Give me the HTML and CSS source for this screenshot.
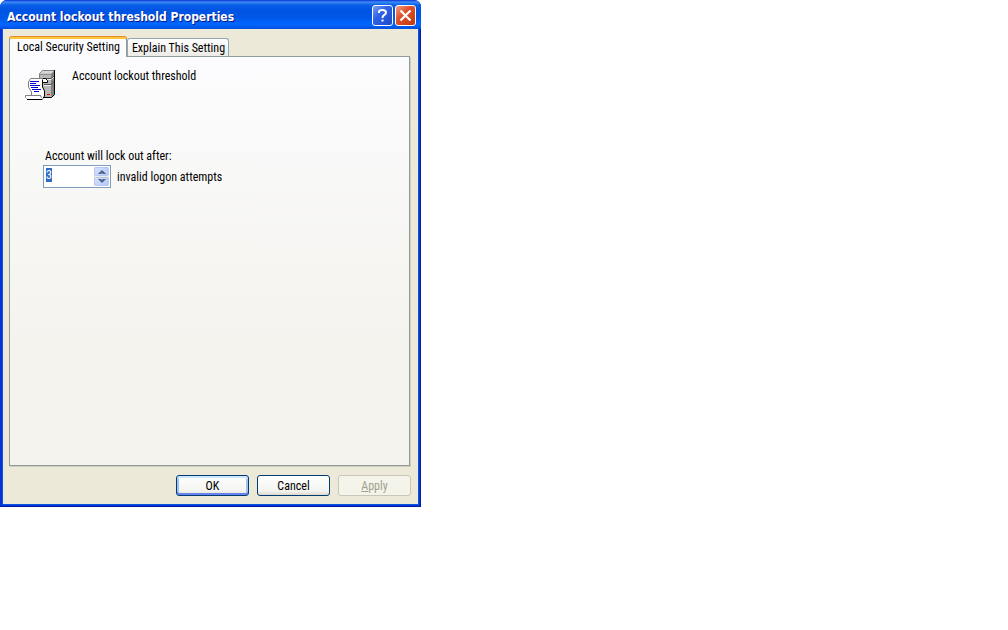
FILE: index.html
```
<!DOCTYPE html>
<html lang="en">
<head>
  <meta charset="UTF-8">
  <title>Account lockout threshold Properties</title>
  <meta name="viewport" content="width=device-width,initial-scale=1">
  <link rel="stylesheet" href="styles.css">
  <script>
    // start with the value selected, ready to type over
    function init(){
      document.getElementById("attempts").select();
    }
    function step(n){
      var box = document.getElementById("attempts");
      box.value = Math.max(0, Number(box.value) + n);
      box.select();
    }
  </script>
</head>
<body onload="init();">
  <form class="dialog" onsubmit="return false;">
    <div class="titlebar">
      <h1>Account lockout threshold Properties</h1>
      <button type="button" class="caption help" aria-label="Help">
        <svg width="19" height="19" viewBox="0 0 19 19">
          <path d="M6 7V5.500Q6.500 4 9.500 4Q13 4 13 6.500Q13 8 11 9.200Q9.500 10 9.500 12M9.500 13.500V15.500" fill="none" stroke="#fff" stroke-width="2"/>
        </svg>
      </button>
      <button type="button" class="caption close" aria-label="Close">
        <svg width="19" height="19" viewBox="0 0 19 19">
          <path d="M4.500 4.500L14.500 14.500M14.500 4.500L4.500 14.500" fill="none" stroke="#fff" stroke-width="2.200"/>
        </svg>
      </button>
    </div>
    <div class="content">
      <div class="tabs">
        <button type="button" class="tab active">Local Security Setting</button>
        <button type="button" class="tab">Explain This Setting</button>
      </div>
      <div class="panel">
        <div class="heading">
          <svg width="32" height="32" viewBox="0 0 32 32">
            <!-- server -->
            <path d="M15 5L19 1H31V26L27 29H15Z" fill="#b8b8b8"/>
            <path d="M27 5L30 2V26L27 28Z" fill="#808080"/>
            <path d="M16 4.500L18.500 1.500H30L27 4.500Z" fill="#d6d6d6"/>
            <path d="M15.500 10V4.500L18.500 1.500H30" fill="none" stroke="#808080"/>
            <path d="M16 5.500H27" stroke="#909090"/>
            <path d="M20 10.500H27L30 8" fill="none" stroke="#f0f0f0"/>
            <path d="M20 9.500H27L30 7M20 15.500H27L30 13" fill="none" stroke="#505050"/>
            <path d="M20 16.500H27" fill="none" stroke="#f0f0f0"/>
            <path d="M30.500 1V25.500L27.500 28.500H19" fill="none" stroke="#000"/>
            <path d="M23 25.500H26" stroke="#f00"/>
            <!-- scroll -->
            <path d="M6.500 9.500H20L23 11V13H18.500V18L20.500 22V27L18 30H3L1.500 26.500H7L8 24L4.500 18V13Z" fill="#fff"/>
            <path d="M7.500 26V23L4.500 18V13L6.500 9.500H19" fill="none" stroke="#808080"/>
            <path d="M19 9.500H21.500L23.500 11.500V13.500H18.500V10.500M18.500 13.500V18L20.500 22V27L19 29.500" fill="none" stroke="#000"/>
            <path d="M17 26.500H1.500V28.500L2.500 29.500M16.500 26.500L17.500 29" fill="none" stroke="#808080"/>
            <path d="M3 30.500H18.500" stroke="#000"/>
            <path d="M6 12.500H15M6 14.500H12M6 16.500H16M7 18.500H14M8 20.500H17M10 22.500H15" stroke="#0000d0"/>
          </svg>
          <span>Account lockout threshold</span>
        </div>
        <div class="setting">
          <label for="attempts">Account will lock out after:</label>
          <div class="row">
            <div class="spinner">
              <input type="text" id="attempts" value="3">
              <div class="arrows">
                <button type="button" aria-label="Increase" onclick="step(1)">
                  <svg width="8" height="5" viewBox="0 0 8 5"><path d="M0 5L4 1L8 5H5L4 4L3 5Z" fill="#4d6185"/></svg>
                </button>
                <button type="button" aria-label="Decrease" onclick="step(-1)">
                  <svg width="8" height="5" viewBox="0 0 8 5"><path d="M0 0L4 4L8 0H5L4 1L3 0Z" fill="#4d6185"/></svg>
                </button>
              </div>
            </div>
            <span>invalid logon attempts</span>
          </div>
        </div>
      </div>
      <div class="buttons">
        <button type="submit" class="default">OK</button>
        <button type="button">Cancel</button>
        <button type="button" disabled><u>A</u>pply</button>
      </div>
    </div>
  </form>
</body>
</html>
```

FILE: styles.css
```
* {
  box-sizing: border-box;
}
body {
  margin: 0;
  background: #fff;
  color: #000;
  font-family: "Roboto Condensed", Roboto, sans-serif;
  font-size: 12px;
  line-height: 14px;
}
button, input {
  margin: 0;
  padding: 0;
  font: inherit;
  color: inherit;
}
svg {
  display: block;
  flex: none;
}
.dialog {
  width: 100%;
  max-width: 421px;
  padding-bottom: 3px;
  border-radius: 7px 7px 0 0;
  background: #0831d9;
  box-shadow: inset -1px -1px #001ea0;
  overflow: hidden;
}

/* title bar */
.titlebar {
  display: flex;
  align-items: center;
  gap: 2px;
  height: 29px;
  padding: 2px 5px 0 7px;
  background: linear-gradient(#0831d9 0, #3c8cf5 2px, #0a5fe8 5px, #0054e3 10px, #0056e6 17px, #0066ff 24px, #005bf0 27px, #003dd0 29px);
}
.titlebar h1 {
  flex: 1;
  margin: 0;
  padding-top: 2px;
  color: #fff;
  font-family: "DejaVu Sans Condensed", "Open Sans", sans-serif;
  font-size: 12px;
  line-height: 16px;
  font-weight: bold;
  text-shadow: 1px 1px #0a1883;
}
.caption {
  width: 21px;
  height: 21px;
  border: 1px solid #fff;
  border-radius: 3px;
}
.help {
  background: linear-gradient(135deg, #7f9ff0, #2f62e8 40%, #1c49c8);
}
.close {
  background: linear-gradient(135deg, #f0a088, #e0512c 40%, #c03810);
}

.content {
  margin: 0 3px;
  padding: 8px 7px 8px 6px;
  background: #ece9d8;
  box-shadow: 0 0 0 1px #0855dd;
}

/* tabs */
.tabs {
  display: flex;
  align-items: flex-end;
}
.tab {
  height: 18px;
  padding: 0 3px 0 4px;
  border: 1px solid #91a7b4;
  border-bottom: 0;
  border-radius: 3px 3px 0 0;
  background: linear-gradient(#fff, #ecebe6);
  white-space: nowrap;
}
.tab.active {
  z-index: 1;
  height: 20px;
  margin-bottom: -1px;
  padding: 0 6px 3px 7px;
  border-color: #919b9c;
  border-top: 2px solid #ffc73c;
  box-shadow: 0 -1px #e68b2c;
  background: #fcfcfe;
}
.panel {
  min-height: 410px;
  margin-right: 1px;
  padding: 12px 14px;
  border: 1px solid #919b9c;
  box-shadow: 1px 1px #d0cebf;
  background: linear-gradient(#fcfcfe, #f4f3ee 70%);
}
.heading {
  display: flex;
  gap: 16px;
}

/* lockout value */
.setting {
  margin: 48px 0 0 19px;
}
.setting label {
  display: block;
  margin: 0 0 2px 2px;
}
.row {
  display: flex;
  align-items: center;
  gap: 6px;
}
.spinner {
  display: flex;
  width: 68px;
  height: 23px;
  padding: 1px;
  border: 1px solid #7f9db9;
  background: #fff;
}
.spinner input {
  flex: 1;
  min-width: 0;
  height: 16px;
  padding-left: 1px;
  border: 0;
  outline: 0;
  background: none;
}
.spinner input::selection {
  background: #316ac5;
  color: #fff;
}
.arrows {
  display: flex;
  flex-direction: column;
  gap: 1px;
  width: 15px;
  background: #ece9d8;
}
.arrows button {
  display: flex;
  flex: 1;
  align-items: center;
  justify-content: center;
  border: 1px solid #b5c8f5;
  border-radius: 2px;
  background: linear-gradient(135deg, #d5e0fe, #b4c8f6);
}

/* bottom buttons */
.buttons {
  display: flex;
  justify-content: flex-end;
  gap: 8px;
  margin-top: 9px;
}
.buttons button {
  width: 73px;
  height: 21px;
  border: 1px solid #003c74;
  border-radius: 3px;
  background: linear-gradient(#fff, #f3f3ef 80%, #dcd8cc);
}
.buttons .default {
  box-shadow: inset 0 2px #cee7ff, inset 0 -2px #6982ee, inset 2px 0 #a5c1f3, inset -2px 0 #a5c1f3;
}
.buttons button:disabled {
  border-color: #c9c7ba;
  background: #f5f4ea;
  color: #a1a192;
}
```
